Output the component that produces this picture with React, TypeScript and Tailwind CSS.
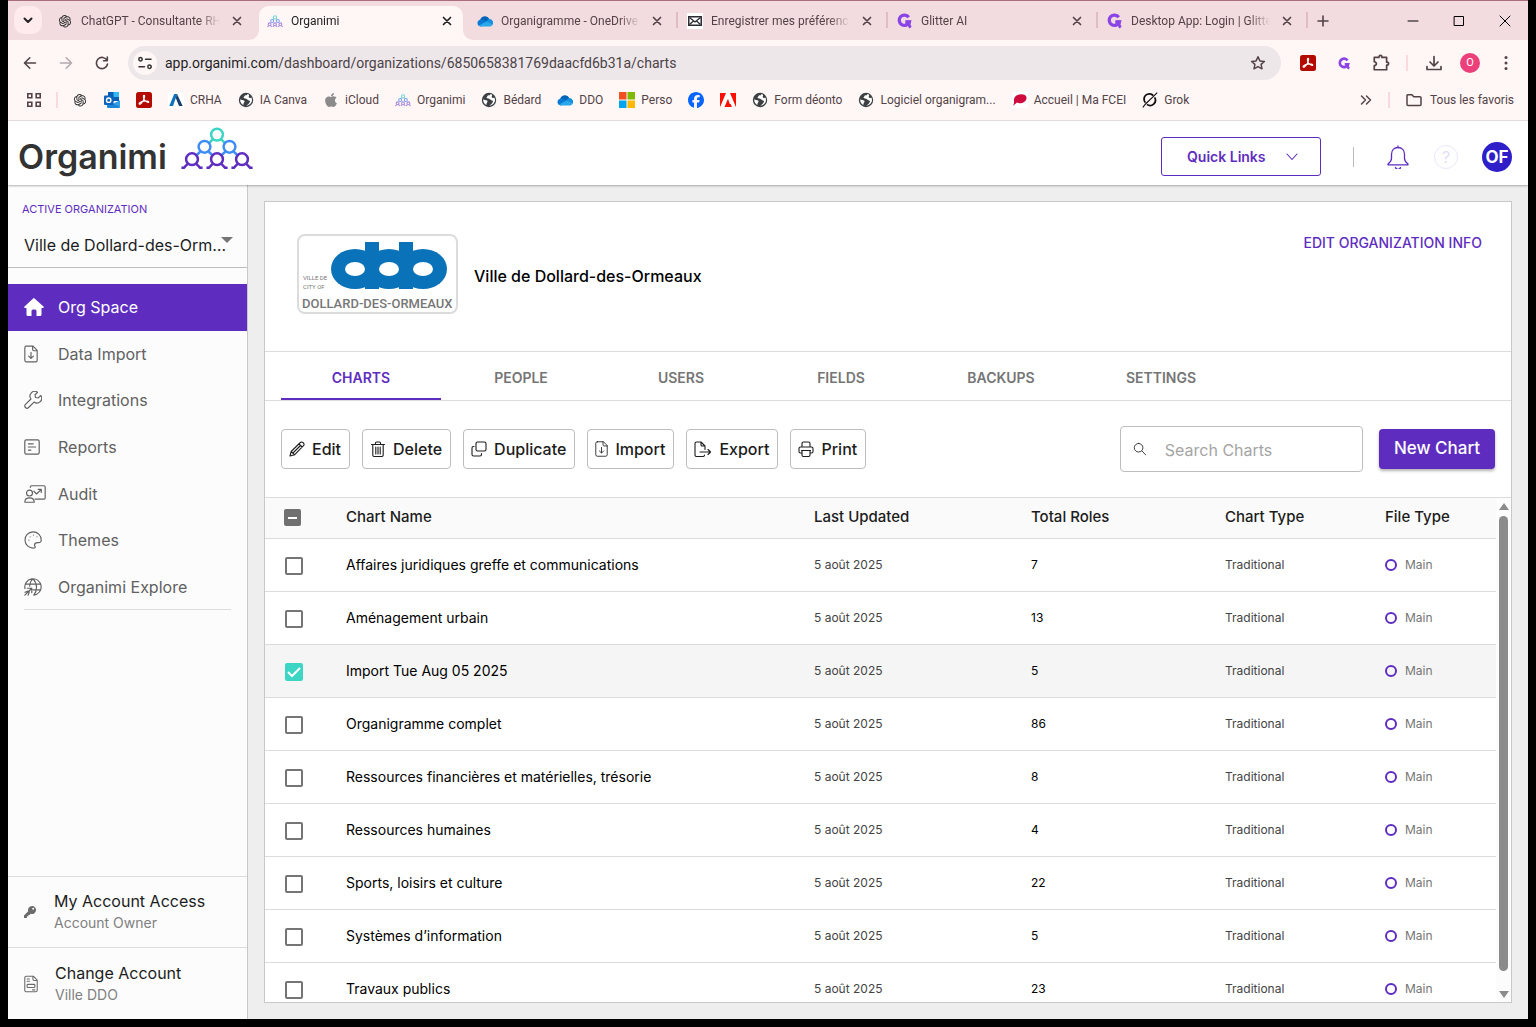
import React, { useEffect, useRef, useState } from "react";
import { AiOutlineOpenAI } from "react-icons/ai";
import { FaApple, FaFacebook } from "react-icons/fa6";

type IconProps = { className?: string };

const stroke = {
  fill: "none",
  stroke: "currentColor",
  strokeLinecap: "round" as const,
  strokeLinejoin: "round" as const,
};

/* ---------- brand marks ---------- */

function Figure({ x, y, color }: { x: number; y: number; color: string }) {
  return (
    <g stroke={color} fill="none" strokeWidth="2.5">
      <circle cx={x} cy={y} r="5.9" />
      <path d={`M${x - 4} ${y + 4.5}l-4.2 4.2M${x + 4} ${y + 4.5}l4.2 4.2`} />
    </g>
  );
}

function OrganimiMark({ className }: IconProps) {
  return (
    <svg viewBox="0 0 72 44" className={className} aria-hidden="true">
      <Figure x={36} y={7.6} color="#3dd6c4" />
      <Figure x={23.5} y={19.8} color="#3f8cf5" />
      <Figure x={48.5} y={19.8} color="#3f8cf5" />
      {[11, 36, 61].map((x) => (
        <g key={x} stroke="#5e2dc0" fill="none" strokeWidth="2.5">
          <circle cx={x} cy={32.2} r="5.9" />
          <path d={`M${x - 4} 36.5l-4 4.2h-2.6M${x + 4} 36.5l4 4.2h2.6`} />
        </g>
      ))}
    </svg>
  );
}

function OrganimiSmall({ className }: IconProps) {
  return (
    <svg viewBox="0 0 16 16" className={className} aria-hidden="true" fill="none" strokeWidth="1.1">
      <g stroke="#6fd8cf"><circle cx="8" cy="4.4" r="1.6" /><path d="M6.8 5.6L5.6 7M9.2 5.6l1.2 1.4" /></g>
      <g stroke="#7fa4ee"><circle cx="5.2" cy="8" r="1.5" /><circle cx="10.8" cy="8" r="1.5" /></g>
      <g stroke="#a98be0">
        <circle cx="2.6" cy="11.3" r="1.4" /><circle cx="8" cy="11.3" r="1.4" /><circle cx="13.4" cy="11.3" r="1.4" />
        <path d="M0.4 13.8l1.3-1.2M4.8 13.8l-1.3-1.2M5.8 13.8l1.3-1.2M10.2 13.8L8.9 12.6M11.2 13.8l1.3-1.2M15.6 13.8l-1.3-1.2" />
      </g>
    </svg>
  );
}

function CloudIcon({ className }: IconProps) {
  return (
    <svg viewBox="0 0 16 16" className={className} aria-hidden="true">
      <path d="M3.2 7.2A4.9 4.9 0 0 1 12.4 6l.3 3.5L2 11z" fill="#0364b8" />
      <path d="M4.6 6.600c3 .2 5 2.300 7.600 3.800L3.800 13.400A3.500 3.500 0 0 1 .5 10C.5 8 2.300 6.500 4.600 6.600z" fill="#0a78d4" />
      <path d="M9.500 8.300c1-1.800 2.300-2.300 3.300-2.200A3.700 3.700 0 0 1 15.300 12.200z" fill="#1490df" />
      <path d="M2 12.400l7.700-4.100 5.600 3.700a3 3 0 0 1-2.600 1.500H3.800A3.400 3.400 0 0 1 2 12.400z" fill="#28a8ea" />
    </svg>
  );
}

function MailIcon({ className }: IconProps) {
  return (
    <svg viewBox="0 0 16 16" className={className} aria-hidden="true">
      <path d="M0 0h16v16H0z" fill="#fff" />
      <path d="M1 3h14v10H1z" fill="#2b2b33" />
      <path d="M2.500 4.500h11v7h-11z" fill="#fff" />
      <path d="M2.500 4.500L8 9l5.500-4.500M2.500 11.500l4-3.500M13.500 11.500l-4-3.500" stroke="#2b2b33" strokeWidth="1.300" fill="none" />
    </svg>
  );
}

function GlitterIcon({ className }: IconProps) {
  return (
    <svg viewBox="0 0 16 16" className={className} aria-hidden="true">
      <path d="M11.700 4.300A5.200 5.200 0 1 0 12.300 9H8.300" fill="none" stroke="#8a45e6" strokeWidth="3.300" />
      <path d="M9.500 7.500h4.200v3.200c-.5 1 .2 1.700 1 2.600l-1.800 2.200c-1.500-.7-2.300-2.300-2.100-4z" fill="#8a45e6" />
    </svg>
  );
}

function AcrobatIcon({ className }: IconProps) {
  return (
    <svg viewBox="0 0 16 16" className={className} aria-hidden="true">
      <rect width="16" height="16" rx="2.500" fill="#b30b00" />
      <path d="M8 3.200c1.200 0 .6 3.200-1 5.700-1.200 2-2.900 3.800-3.800 3.200-.8-.8 1.600-2.500 4.600-3 2.600-.4 5.100.1 5 1-.3 1.200-3.200-.3-4.600-2.500C7.200 6 7.100 3.200 8 3.200z" fill="none" stroke="#fff" strokeWidth="1.100" />
    </svg>
  );
}

function OutlookIcon({ className }: IconProps) {
  return (
    <svg viewBox="0 0 16 16" className={className} aria-hidden="true">
      <path d="M4 0h11v9H4z" fill="#0a5fb4" />
      <path d="M9.500 0H15v5H9.500z" fill="#35b8f1" />
      <path d="M4 5h5.500v5H4z" fill="#0f6fc5" />
      <path d="M3 9l7 3 6-3.500V15a1 1 0 0 1-1 1H4a1 1 0 0 1-1-1z" fill="#1a86d9" />
      <path d="M16 8.500V15l-7-3.500z" fill="#2f9fe6" />
      <rect y="3.500" width="9.500" height="9.500" rx="1" fill="#0b62bb" />
      <circle cx="4.700" cy="8.200" r="2.200" fill="none" stroke="#fff" strokeWidth="1.400" />
    </svg>
  );
}

function CrhaIcon({ className }: IconProps) {
  return (
    <svg viewBox="0 0 16 16" className={className} aria-hidden="true">
      <path d="M0 0h16v16H0z" fill="#fff" />
      <path d="M1.300 14L6.200 2h3L5 14z" fill="#0d72bd" />
      <path d="M9 2l5.700 12H11L7.800 6z" fill="#173f70" />
    </svg>
  );
}

function GlobeIcon({ className }: IconProps) {
  return (
    <svg viewBox="0 0 16 16" className={className} aria-hidden="true">
      <circle cx="8" cy="8" r="7.200" fill="#3c4043" />
      <path d="M9.500 2c-.3 1.300-1.600 1.200-2.600 1.600-.8.400-.4 1.600-1.500 2C6 6.800 8.200 6.300 9 7.300c.7 1 2 .8 2.800 1.600.6.700-.4 1.600-.8 2.300-.5 1-1.600 1.600-2.700 2.400 3.300 0 5.700-2.600 5.700-5.500 0-1-.3-1.800-.7-2.500-.8.700-2.200.4-2.500-.6-.3-.8.500-1.400.3-2.300zM2.200 7.300c1 .7 2.700.6 3.800 1.300.9.700.6 1.500 0 2-.6.400-.3 1.300-.7 2.300C3.200 11.900 2 10 2.200 7.300z" fill="#fff" />
    </svg>
  );
}

function MicrosoftIcon({ className }: IconProps) {
  return (
    <svg viewBox="0 0 16 16" className={className} aria-hidden="true">
      <path d="M0 0h7.500v7.500H0z" fill="#f25022" />
      <path d="M8.500 0H16v7.500H8.500z" fill="#7fba00" />
      <path d="M0 8.500h7.500V16H0z" fill="#00a4ef" />
      <path d="M8.500 8.500H16V16H8.500z" fill="#ffb900" />
    </svg>
  );
}

function AdobeIcon({ className }: IconProps) {
  return (
    <svg viewBox="0 0 16 16" className={className} aria-hidden="true">
      <path d="M0 1h16v14H0z" fill="#fa0f00" />
      <path d="M6 1h4l5.900 14h-4L10.700 12H7.800l2-0L8 6.700 4.500 15H.1z" fill="#fff" />
    </svg>
  );
}

function FceiIcon({ className }: IconProps) {
  return (
    <svg viewBox="0 0 16 16" className={className} aria-hidden="true">
      <path d="M0 0h16v16H0z" fill="#fff" />
      <path d="M4.500 3.500c4-2 8.500-1.500 9.700 1 1.300 3-1.400 6.300-5.200 6.700-1.600.2-3-.1-4-.6L.8 14c.9-1.500 1.400-3 1.200-4.500-.3-2.500.6-4.900 2.500-6z" fill="#cf0a3c" />
    </svg>
  );
}

function GrokIcon({ className }: IconProps) {
  return (
    <svg viewBox="0 0 16 16" className={className} aria-hidden="true" fill="none" stroke="#111">
      <path d="M11.300 3.600A5.300 5.300 0 0 0 3.400 10.700" strokeWidth="1.800" />
      <path d="M4.900 12.400a5.300 5.300 0 0 0 7.700-7" strokeWidth="1.800" />
      <path d="M.8 15.300L4 11.500 11.500 4.300 15.200.7" strokeWidth="1.100" />
    </svg>
  );
}

function AppsIcon({ className }: IconProps) {
  return (
    <svg viewBox="0 0 16 16" className={className} fill="none" stroke="currentColor" strokeWidth="1.600" aria-hidden="true">
      <path d="M1.800 1.800h4v4h-4zM10.200 1.800h4v4h-4zM1.800 10.200h4v4h-4zM10.200 10.200h4v4h-4z" />
    </svg>
  );
}

/* ---------- interface icons ---------- */

function Icon({ d, size = "size-4", width = 1.6, box = "0 0 16 16" }: { d: string; size?: string; width?: number; box?: string }) {
  return (
    <svg viewBox={box} className={size} {...stroke} strokeWidth={width} aria-hidden="true">
      <path d={d} />
    </svg>
  );
}

const paths = {
  close: "M4.500 4.500l7 7M11.500 4.500l-7 7",
  chevron: "M4.500 6.500L8 10l3.500-3.500",
  plus: "M8 3v10M3 8h10",
  back: "M13.500 8H2.800M7.800 2.800L2.500 8l5.300 5.200",
  forward: "M2.500 8h10.700M8.200 2.800L13.500 8l-5.300 5.200",
  reload: "M13 5.500A5.600 5.600 0 1 0 13.500 9M13.300 2v3.700H9.600",
  star: "M8 1.800l1.900 4.100 4.500.5-3.300 3 .9 4.400L8 11.600l-4 2.200.9-4.400-3.300-3 4.500-.5z",
  puzzle: "M2 3h4.200c0-1.300.6-1.700 1.300-1.700s1.300.4 1.300 1.700H13v4.300c1.300 0 1.700.6 1.700 1.300s-.4 1.300-1.700 1.300V14H2v-3.700c1.300-.2 1.900-.9 1.900-1.700S3.300 7.100 2 6.900z",
  download: "M8 1.500v9M4 7l4 4 4-4M1 11.500v3h14v-3",
  more: "M3.500 4l4 4-4 4M8.500 4l4 4-4 4",
  folder: "M1 3.500A1 1 0 0 1 2 2.700h4l1.700 2H14a1 1 0 0 1 1 1v6.900a1 1 0 0 1-1 1H2a1 1 0 0 1-1-1z",
  file: "M3 1h8l5 5v12a2 2 0 0 1-2 2H3a2 2 0 0 1-2-2V3a2 2 0 0 1 2-2zM10.500 1v4a1.500 1.500 0 0 0 1.500 1.500h4M8.500 8.500v7M5.700 13l2.800 2.800 2.800-2.800",
  wrench: "M1.800 20.200a2.700 2.700 0 0 1 0-3.800l6.700-6.600A5.800 5.800 0 0 1 16.500 1.600l-3 3 .5 3.400 3.500.5 3-3a5.800 5.800 0 0 1-8.200 8l-6.700 6.700a2.700 2.700 0 0 1-3.800 0z",
  report: "M3 1h14a2 2 0 0 1 2 2v14a2 2 0 0 1-2 2H3a2 2 0 0 1-2-2V3a2 2 0 0 1 2-2zM5.500 6h6M5.500 10h9M5.500 14h3",
  audit: "M8 3V2.500A1.500 1.500 0 0 1 9.500 1h16A1.500 1.500 0 0 1 27 2.500v14a1.500 1.500 0 0 1-1.500 1.500H14M7 6.500a3.800 3.800 0 1 1 0 7.600a3.800 3.800 0 0 1 0-7.600zM1 22c0-3.800 2.300-5.500 6-5.500s6 1.700 6 5.500zM12.500 8l3.500 3.500 6-6M18 5.500h4v4",
  palette: "M12 20.800A9.900 9.900 0 1 1 21 11c.2 2.500-1.500 3.300-3.500 3.200-2.500-.2-4.500.3-4.700 2.800 0 1.500 1.200 1.500 1 2.700-.1.700-.8 1.100-1.800 1.100zM6 11.200h.01M7.500 7h.01M11.500 5h.01M15.800 7h.01",
  globe: "M1.200 13A10 10 0 1 1 12 20.900M2 7.500H20M11 14.500h9.300M11 1C8 3.500 7 7 7 10M11 1c5.500 5.500 5.500 14.500 1 20M1 21l8.500-8.500M4 12.500h5.500V18M1.200 17.500l4-1.500M5 21l1.500-4",
  doc: "M3 1h9l5 5v13a2 2 0 0 1-2 2H3a2 2 0 0 1-2-2V3a2 2 0 0 1 2-2zM11.500 1v4A1.500 1.500 0 0 0 13 6.500h4M4 4.500h3M4 7.500h3M5 11.500h8a1 1 0 0 1 1 1v2a1 1 0 0 1-1 1H5a1 1 0 0 1-1-1v-2a1 1 0 0 1 1-1zM11 18.500h3",
  pencil: "M1 15l1.200-4.500L11.300 1.500a1.800 1.800 0 0 1 2.600 0l.6.600a1.800 1.800 0 0 1 0 2.600L5.500 13.800zM2.200 10.500l3.300 3.300M10 2.800L13.200 6M4.500 11.500l6.500-6.500",
  trash: "M1.500 3.500h13M5.500 3.500V2A1 1 0 0 1 6.500 1h3a1 1 0 0 1 1 1v1.500M2.800 3.500V14A1.500 1.500 0 0 0 4.300 15.500h7.400A1.500 1.500 0 0 0 13.200 14V3.500M5.800 6v7M8 6v7M10.200 6v7",
  copy: "M6.500 1h7A1.500 1.500 0 0 1 15 2.500v6A1.500 1.500 0 0 1 13.500 10h-7A1.500 1.500 0 0 1 5 8.500v-6A1.500 1.500 0 0 1 6.500 1zM3 5.500h-.5A1.500 1.500 0 0 0 1 7v6.500A1.500 1.500 0 0 0 2.500 15H9a1.500 1.500 0 0 0 1.500-1.500V12.500",
  export: "M10.500 14A1.500 1.500 0 0 1 9 15.500H2.500A1.500 1.500 0 0 1 1 14V2.500A1.500 1.500 0 0 1 2.500 1H7l4 4v3.500M7 1v3A1 1 0 0 0 8 5h3M6 11h10.500M14 8.500l2.500 2.500-2.500 2.500",
  print: "M4 5V2.500A1.500 1.500 0 0 1 5.500 1h5A1.500 1.500 0 0 1 12 2.500V5M3.500 12H2.500A1.500 1.500 0 0 1 1 10.500v-3A1.500 1.500 0 0 1 2.500 6h11A1.500 1.500 0 0 1 15 7.500v3A1.500 1.500 0 0 1 13.500 12h-1M3.500 9.500h9M4 9.500V14A1.500 1.500 0 0 0 5.500 15.500h5A1.500 1.500 0 0 0 12 14V9.500",
  search: "M6.500 1.500a5 5 0 1 1 0 10a5 5 0 0 1 0-10zM10.200 10.200l4.500 4.500",
  bell: "M12 2.500V1M12 2.500c4 0 6.500 3 6.500 7v4c0 2.500 1.500 4 3.500 5.500v.8H2V19c2-1.500 3.500-3 3.500-5.500v-4c0-4 2.500-7 6.500-7zM9.500 22.500a2.600 2.600 0 0 0 5 0",
};

/* ---------- browser chrome ---------- */

const tabs = [
  { title: "ChatGPT - Consultante RH", icon: <AiOutlineOpenAI className="size-4 text-[#333]" /> },
  { title: "Organimi", icon: <OrganimiSmall className="size-4" />, active: true },
  { title: "Organigramme - OneDrive", icon: <CloudIcon className="size-4" /> },
  { title: "Enregistrer mes préférences", icon: <MailIcon className="size-4" /> },
  { title: "Glitter AI", icon: <GlitterIcon className="size-4" /> },
  { title: "Desktop App: Login | Glitter", icon: <GlitterIcon className="size-4" /> },
];

function TabStrip() {
  return (
    <div className="flex h-10 items-stretch border-t border-[#a96d7d] bg-[#f3dcdf] pl-[6px]">
      <button aria-label="Rechercher dans les onglets" className="mt-[5px] mr-1 flex size-7 items-center justify-center rounded-[10px] bg-[#ffebed] text-[#222]">
        <Icon d={paths.chevron} width={2} />
      </button>
      {tabs.map((t, i) => (
        <div key={t.title} className="relative flex w-[210px] min-w-0 shrink pt-[5px]">
          {t.active && (
            <svg viewBox="0 0 226 34" className="absolute bottom-0 -left-2 h-[34px] w-[226px]" fill="#fff7f6" aria-hidden="true">
              <path d="M0 34c7 0 11-4 11-11V11C11 4 15 0 22 0h182c7 0 11 4 11 11v12c0 7 4 11 11 11z" />
            </svg>
          )}
          {i > 2 && <span className="absolute top-[11px] left-0 h-4 w-[2px] bg-[#dfbdc5]" />}
          <div className="relative flex h-7 min-w-0 flex-1 items-center pt-px pr-[11px] pl-[11px]">
            {t.icon}
            <span className={`ml-2 min-w-0 flex-1 overflow-hidden text-[12px] whitespace-nowrap [mask-image:linear-gradient(to_right,black_85%,transparent)] ${t.active ? "text-[#222]" : "text-[#534347]"}`}>{t.title}</span>
            <button aria-label="Fermer l’onglet" className={`ml-[9px] ${t.active ? "text-[#222]" : "text-[#534347]"}`}>
              <Icon d={paths.close} width={1.7} />
            </button>
          </div>
        </div>
      ))}
      <div className="relative flex flex-1 items-center pl-[9px] text-[#534347]">
        <span className="absolute top-[11px] left-0 h-4 w-[2px] bg-[#dfbdc5]" />
        <button aria-label="Nouvel onglet"><Icon d={paths.plus} /></button>
        <div className="ml-auto flex gap-[30px] pr-[15px] text-black">
          <button aria-label="Réduire"><Icon d="M3 8h10" width={1} /></button>
          <button aria-label="Agrandir"><Icon d="M3.500 3.500h9v9h-9z" width={1} /></button>
          <button aria-label="Fermer"><Icon d="M3 3l10 10M13 3L3 13" width={1} /></button>
        </div>
      </div>
    </div>
  );
}

function AddressBar() {
  return (
    <div className="flex h-[46px] items-center pr-[14px] pl-[14px] text-[#534347]">
      <button aria-label="Retour"><Icon d={paths.back} /></button>
      <button aria-label="Avancer" className="ml-5 text-[#b5aaae]"><Icon d={paths.forward} /></button>
      <button aria-label="Actualiser" className="ml-5"><Icon d={paths.reload} /></button>
      <div className="ml-[18px] flex h-[34px] flex-1 items-center rounded-full bg-[#eee7ea] pr-[15px] pl-[5px]">
        <span className="flex size-6 items-center justify-center rounded-full bg-[#fff7f6] text-[#333]">
          <Icon d="M3.500 2.500a1.700 1.700 0 1 1 0 3.400a1.700 1.700 0 0 1 0-3.400zM8.500 4.200H14M12.500 10.100a1.700 1.700 0 1 1 0 3.400a1.700 1.700 0 0 1 0-3.400zM2 11.800h5.500" width={1.5} />
        </span>
        <span className="ml-2 flex-1 text-[14px] text-[#4b4347]"><span className="text-[#1f1f1f]">app.organimi.com</span>/dashboard/organizations/6850658381769daacfd6b31a/charts</span>
        <button aria-label="Ajouter aux favoris"><Icon d={paths.star} width={1.5} /></button>
      </div>
      <AcrobatIcon className="ml-[19px] size-4" />
      <GlitterIcon className="ml-[22px] size-[13px]" />
      <button aria-label="Extensions" className="ml-[21px]"><Icon d={paths.puzzle} width={1.5} size="size-[18px]" /></button>
      <span className="ml-4 h-4 w-[2px] bg-[#fadadd]" />
      <button aria-label="Téléchargements" className="ml-[18px]"><Icon d={paths.download} width={1.7} /></button>
      <button className="ml-[18px] size-5 rounded-full bg-[#ec407a] text-[11px] leading-5 text-white">O</button>
      <button aria-label="Menu" className="ml-[18px]">
        <svg viewBox="0 0 16 16" className="size-4" fill="currentColor" aria-hidden="true"><circle cx="8" cy="2.500" r="1.500" /><circle cx="8" cy="8" r="1.500" /><circle cx="8" cy="13.500" r="1.500" /></svg>
      </button>
    </div>
  );
}

const bookmarks: { label?: string; name?: string; icon: React.ReactNode }[] = [
  { name: "ChatGPT", icon: <AiOutlineOpenAI className="size-4 text-[#333]" /> },
  { name: "Outlook", icon: <OutlookIcon className="size-4" /> },
  { name: "Acrobat", icon: <AcrobatIcon className="size-4" /> },
  { label: "CRHA", icon: <CrhaIcon className="size-4" /> },
  { label: "IA Canva", icon: <GlobeIcon className="size-4" /> },
  { label: "iCloud", icon: <FaApple className="size-4 text-[#8b8b8b]" /> },
  { label: "Organimi", icon: <OrganimiSmall className="size-4" /> },
  { label: "Bédard", icon: <GlobeIcon className="size-4" /> },
  { label: "DDO", icon: <CloudIcon className="size-4" /> },
  { label: "Perso", icon: <MicrosoftIcon className="size-4" /> },
  { name: "Facebook", icon: <FaFacebook className="size-4 text-[#0866ff]" /> },
  { name: "Adobe", icon: <AdobeIcon className="size-4" /> },
  { label: "Form déonto", icon: <GlobeIcon className="size-4" /> },
  { label: "Logiciel organigram...", icon: <GlobeIcon className="size-4" /> },
  { label: "Accueil | Ma FCEI", icon: <FceiIcon className="size-4" /> },
  { label: "Grok", icon: <GrokIcon className="size-4" /> },
];

function BookmarksBar() {
  return (
    <div className="flex h-[35px] items-center border-b border-[#e6dee0] pr-[14px] pb-[6px] pl-[18px] text-[12px] text-[#534347]">
      <button aria-label="Applications"><AppsIcon className="size-4" /></button>
      <span className="ml-[14px] h-4 w-[2px] bg-[#fadadd]" />
      <nav className="ml-[14px] flex items-center gap-4">
        {bookmarks.map((b, i) => (
          <a key={i} href="#" aria-label={b.name} className="flex items-center gap-[6px] whitespace-nowrap">
            {b.icon}
            {b.label}
          </a>
        ))}
      </nav>
      <button aria-label="Autres favoris" className="ml-auto"><Icon d={paths.more} width={1.5} /></button>
      <span className="ml-[14px] h-4 w-[2px] bg-[#fadadd]" />
      <button className="ml-4 flex items-center gap-2 whitespace-nowrap"><Icon d={paths.folder} width={1.5} />Tous les favoris</button>
    </div>
  );
}

/* ---------- application ---------- */

function AppHeader() {
  return (
    <header className="relative z-10 flex h-16 shrink-0 items-center bg-white pr-4 pl-[10px] shadow-[0_1px_2px_rgba(0,0,0,0.3)]">
      <a href="#" aria-label="Organimi" className="flex items-start gap-[14px]">
        <span className="pt-2 text-[34px] leading-[44px] font-semibold text-[#333]">Organimi</span>
        <OrganimiMark className="h-11 w-[72px]" />
      </a>
      <button className="mt-[7px] ml-auto flex h-[39px] w-[160px] items-center justify-between rounded-[3px] border border-[#5e2dc0] pr-5 pl-[25px] text-[14px] font-semibold text-[#5e2dc0]">
        Quick Links
        <Icon d="M3 5l5 5.500L13 5" width={1.100} />
      </button>
      <span className="mt-2 ml-8 h-5 w-px bg-[#bbb]" />
      <button aria-label="Notifications" className="mt-[7px] ml-8 text-[#5e2dc0]"><Icon d={paths.bell} box="0 0 24 24" size="size-6" width={1.300} /></button>
      <button aria-label="Aide" className="mt-[7px] ml-6 size-6 rounded-full border border-[#ece6fa] text-[16px] leading-[22px] text-[#e3dcf5]">?</button>
      <button className="mt-[7px] ml-6 size-[30px] rounded-full bg-[#2f1fc9] text-[17px] leading-[30px] font-bold text-white">OF</button>
    </header>
  );
}

const menu = [
  { label: "Data Import", icon: <Icon d={paths.file} box="0 0 17 21" size="h-[18px] w-[14px]" width={1.400} /> },
  { label: "Integrations", icon: <Icon d={paths.wrench} box="0 0 22 22" size="size-[18px]" width={1.400} /> },
  { label: "Reports", icon: <Icon d={paths.report} box="0 0 20 20" size="size-4" width={1.500} /> },
  { label: "Audit", icon: <Icon d={paths.audit} box="0 0 28 23" size="h-[18px] w-[22px]" width={1.500} /> },
  { label: "Themes", icon: <Icon d={paths.palette} box="0 0 22 22" size="size-[18px]" width={1.400} /> },
  { label: "Organimi Explore", icon: <Icon d={paths.globe} box="0 0 22 22" size="size-[18px]" width={1.400} /> },
];

function Sidebar() {
  return (
    <aside className="flex w-60 shrink-0 flex-col border-r border-[#c8c8c8] bg-[#fcfcfc]">
      <div className="relative h-[83px] border-b border-[#bdbdbd] pt-4 pl-[14px]">
        <label htmlFor="org" className="block text-[11px] leading-4 text-[#5e2dc0]">ACTIVE ORGANIZATION</label>
        <select id="org" className="mt-4 ml-[2px] block w-[208px] appearance-none truncate bg-transparent text-[16px] leading-6 text-[#1c1c1c]">
          <option>Ville de Dollard-des-Ormeaux</option>
        </select>
        <svg viewBox="0 0 12 6" className="absolute top-[52px] right-[14px] h-[6px] w-3" fill="#757575" aria-hidden="true"><path d="M0 0h12L6 6z" /></svg>
      </div>
      <nav className="mt-4 flex h-[326px] flex-col text-[16px] text-[#616161]">
        <a href="#" className="flex flex-1 items-center bg-[#5e2dc0] pl-4 text-white">
          <svg viewBox="0 0 20 18" className="h-[18px] w-5" fill="currentColor" aria-hidden="true"><path d="M10 0l9.500 8.500c.6.600.3 1.500-.6 1.500H17.500v6.500A1.500 1.500 0 0 1 16 18h-3.500v-5a1.500 1.500 0 0 0-1.500-1.500H9A1.500 1.500 0 0 0 7.500 13v5H4a1.500 1.500 0 0 1-1.500-1.500V10H1.100C.2 10-.1 9.100.5 8.500L8.900.7A1.700 1.700 0 0 1 10 0z" /></svg>
          <span className="ml-[14px]">Org Space</span>
        </a>
        {menu.map((m) => (
          <a key={m.label} href="#" className="flex flex-1 items-center pl-4">
            <span className="flex w-[34px]">{m.icon}</span>
            {m.label}
          </a>
        ))}
      </nav>
      <hr className="mx-4 mt-[-1px] border-[#dcdcdc]" />
      <div className="mt-auto">
        <a href="#" className="flex h-[71px] items-center border-t border-[#dcdcdc] pl-4">
          <svg viewBox="0 0 12 12" className="size-3 text-[#6b6b6b]" fill="currentColor" aria-hidden="true"><path fillRule="evenodd" d="M8 0a4 4 0 1 1-1.200 7.800L5.500 9H4.300v1.200H3V11.500L2.500 12H0V9.500l4.200-4.300A4 4 0 0 1 8 0zm1.200 1.800a1 1 0 1 0 0 2a1 1 0 0 0 0-2z" /></svg>
          <span className="ml-[18px]">
            <span className="block text-[16px] leading-[22px] text-[#1c1c1c]">My Account Access</span>
            <span className="block text-[14px] leading-[22px] text-[#808080]">Account Owner</span>
          </span>
        </a>
        <a href="#" className="flex h-[72px] items-center border-t border-[#dcdcdc] pl-4">
          <span className="text-[#6b6b6b]"><Icon d={paths.doc} box="0 0 18 22" size="h-[18px] w-[14px]" width={1.400} /></span>
          <span className="ml-[17px]">
            <span className="block text-[16px] leading-[22px] text-[#1c1c1c]">Change Account</span>
            <span className="block text-[14px] leading-[22px] text-[#808080]">Ville DDO</span>
          </span>
        </a>
      </div>
    </aside>
  );
}

function OrgHeader() {
  return (
    <section className="flex h-[150px] shrink-0 items-start border-b border-[#dcdcdc] pr-[29px] pl-8">
      <div className="mt-8 w-[161px] rounded-lg border-2 border-[#dcdcdc]">
        <svg viewBox="0 0 157 76" className="block h-[76px] w-full" role="img" aria-label="Ville de Dollard-des-Ormeaux">
          <g fill="#0a72b8">
            <ellipse cx="56" cy="33" rx="24" ry="20" />
            <ellipse cx="90" cy="33" rx="24" ry="20" />
            <ellipse cx="124" cy="33" rx="24" ry="20" />
            <path d="M66 6h14v47H66zM100 6h14v47h-14z" />
          </g>
          <g fill="#fff"><ellipse cx="56" cy="33" rx="10" ry="7" /><ellipse cx="90" cy="33" rx="10" ry="7" /><ellipse cx="124" cy="33" rx="10" ry="7" /></g>
          <g fill="#777" className="font-['Roboto',sans-serif]">
            <text x="4" y="44" fontSize="6">VILLE DE</text>
            <text x="4" y="53" fontSize="6">CITY OF</text>
            <text x="3" y="72" fontSize="13" fontWeight="500">DOLLARD-DES-ORMEAUX</text>
          </g>
        </svg>
      </div>
      <h1 className="mt-[62px] ml-4 text-[16px] leading-6 font-medium text-black">Ville de Dollard-des-Ormeaux</h1>
      <a href="#" className="mt-[30px] ml-auto text-[14px] leading-[22px] font-medium text-[#5e2dc0]">EDIT ORGANIZATION INFO</a>
    </section>
  );
}

const actions = [
  { label: "Edit", icon: paths.pencil, box: "0 0 16 16", size: "size-4" },
  { label: "Delete", icon: paths.trash, box: "0 0 16 16", size: "size-4" },
  { label: "Duplicate", icon: paths.copy, box: "0 0 16 16", size: "size-4" },
  { label: "Import", icon: paths.file, box: "0 0 17 21", size: "h-4 w-[13px]" },
  { label: "Export", icon: paths.export, box: "0 0 18 16", size: "h-4 w-[18px]" },
  { label: "Print", icon: paths.print, box: "0 0 16 16", size: "size-4" },
];

function Toolbar() {
  return (
    <section className="flex h-[97px] shrink-0 items-center gap-3 border-b border-[#dcdcdc] px-4">
      {actions.map((a) => (
        <button key={a.label} className="flex h-10 items-center gap-[7px] rounded border border-[#bdbdbd] pr-2 pl-[7px] text-[16px] font-medium text-[#1c1c1c]">
          <Icon d={a.icon} box={a.box} size={a.size} width={1.1} />
          {a.label}
        </button>
      ))}
      <label className="ml-auto flex h-[46px] w-[243px] items-center rounded border border-[#bdbdbd] pl-3 text-[#333]">
        <Icon d={paths.search} width={1.100} />
        <input type="text" placeholder="Search Charts" aria-label="Search Charts" className="ml-[18px] w-full min-w-0 pt-px text-[16px] outline-none placeholder:text-[#a5a5a5]" />
      </label>
      <button className="ml-1 h-10 w-[116px] rounded bg-[#5e2dc0] text-[17px] font-medium text-white shadow-[0_2px_3px_rgba(0,0,0,0.3)]">New Chart</button>
    </section>
  );
}

const charts = [
  { name: "Affaires juridiques greffe et communications", roles: 7 },
  { name: "Aménagement urbain", roles: 13 },
  { name: "Import Tue Aug 05 2025", roles: 5, selected: true },
  { name: "Organigramme complet", roles: 86 },
  { name: "Ressources financières et matérielles, trésorie", roles: 8 },
  { name: "Ressources humaines", roles: 4 },
  { name: "Sports, loisirs et culture", roles: 22 },
  { name: "Systèmes d’information", roles: 5 },
  { name: "Travaux publics", roles: 23 },
];

function RowCheck({ label, initial }: { label: string; initial: boolean }) {
  const [on, setOn] = useState(initial);
  return (
    <span className="relative ml-5 block size-[18px]">
      <input type="checkbox" aria-label={label} checked={on} onChange={() => setOn(!on)} className="peer block size-[18px] appearance-none rounded-[2px] border-2 border-[#757575] checked:border-[#3dd6c4] checked:bg-[#3dd6c4]" />
      <svg viewBox="0 0 18 18" className="pointer-events-none absolute inset-0 hidden size-[18px] peer-checked:block" fill="none" stroke="#fff" strokeWidth="2" aria-hidden="true"><path d="M3 9l4 4 8-8" /></svg>
    </span>
  );
}

function ChartTable() {
  const all = useRef<HTMLInputElement>(null);
  useEffect(() => {
    if (all.current) all.current.indeterminate = true;
  }, []);
  return (
    <section className="flex min-h-0 flex-1 overflow-hidden">
      <div className="min-w-0 flex-1">
        <table className="w-full table-fixed border-collapse text-left">
          <colgroup>
            <col className="w-[81px]" />
            <col />
            <col className="w-[217px]" />
            <col className="w-[194px]" />
            <col className="w-[160px]" />
            <col className="w-[111px]" />
          </colgroup>
          <thead>
            <tr className="h-10 border-b border-[#dcdcdc] bg-[#fafafa] text-[15px] text-[#1c1c1c]">
              <th>
                <span className="relative ml-[19px] block size-[17px]">
                  <input ref={all} type="checkbox" aria-label="Select all charts" className="block size-[17px] appearance-none rounded-[2px] bg-[#707070]" />
                  <span className="pointer-events-none absolute top-[8px] left-[4px] h-[2px] w-[9px] bg-white" />
                </span>
              </th>
              {["Chart Name", "Last Updated", "Total Roles", "Chart Type", "File Type"].map((h) => (
                <th key={h} className="pb-[2px] font-medium">{h}</th>
              ))}
            </tr>
          </thead>
          <tbody>
            {charts.map((c) => (
              <tr key={c.name} className={`h-[53px] border-b border-[#dcdcdc] ${c.selected ? "bg-[#f5f5f5]" : "bg-white"}`}>
                <td className="pt-[2px]"><RowCheck label={c.name} initial={!!c.selected} /></td>
                <td className="text-[14px] text-black">{c.name}</td>
                <td className="text-[12px] text-[#444]">5 août 2025</td>
                <td className="text-[12px] text-black">{c.roles}</td>
                <td className="text-[12px] text-[#444]">Traditional</td>
                <td className="text-[12px] text-[#757575]">
                  <span className="flex items-center gap-2"><span className="size-3 rounded-full border-2 border-[#5e2dc0]" />Main</span>
                </td>
              </tr>
            ))}
          </tbody>
        </table>
      </div>
      <div className="flex w-[15px] flex-col items-center bg-[#fcfcfc] pt-[5px] pb-1" aria-hidden="true">
        <svg viewBox="0 0 10 7" className="h-[7px] w-[10px]" fill="#8b8b8b"><path d="M5 0l5 7H0z" /></svg>
        <span className="mt-[6px] mb-5 w-[9px] flex-1 rounded-full bg-[#8b8b8b]" />
        <svg viewBox="0 0 10 7" className="h-[7px] w-[10px]" fill="#8b8b8b"><path d="M0 0h10L5 7z" /></svg>
      </div>
    </section>
  );
}

export default function App() {
  return (
    <div className="h-screen overflow-hidden bg-black px-2 pb-2 font-['Inter',sans-serif]">
      <div className="flex h-full flex-col overflow-hidden bg-[#eee]">
        <div className="shrink-0 bg-[#fff7f6] font-['Roboto','Noto_Sans',sans-serif]">
          <TabStrip />
          <AddressBar />
          <BookmarksBar />
        </div>
        <AppHeader />
        <div className="flex min-h-0 flex-1">
          <Sidebar />
          <main className="min-w-0 flex-1 p-4">
            <div className="flex h-full flex-col overflow-hidden border border-[#c8c8c8] bg-white">
              <OrgHeader />
              <nav className="flex h-[49px] shrink-0 border-b border-[#dcdcdc] pl-4 text-[14px] font-semibold text-[#757575]">
                {["CHARTS", "PEOPLE", "USERS", "FIELDS", "BACKUPS", "SETTINGS"].map((t, i) => (
                  <button key={t} className={`w-40 border-b-2 pt-[4px] ${i === 0 ? "border-[#5e2dc0] text-[#5e2dc0]" : "border-transparent"}`}>{t}</button>
                ))}
              </nav>
              <Toolbar />
              <ChartTable />
            </div>
          </main>
        </div>
      </div>
    </div>
  );
}
